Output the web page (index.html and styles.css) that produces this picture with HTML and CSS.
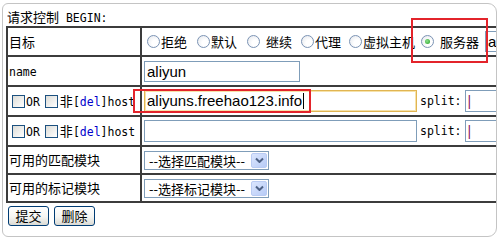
FILE: index.html
```html
<!DOCTYPE html>
<html lang="zh-CN">
<head>
<meta charset="utf-8">
<title>请求控制</title>
<link rel="stylesheet" href="styles.css">
</head>
<body>
<div class="frame">
  <div class="head">请求控制<span class="m"> BEGIN:</span></div>
  <table class="grid">
    <tr class="r1">
      <td class="c1">目标</td>
      <td class="c2">
        <div class="radios">
          <span class="opt"><span class="radio"></span><span class="lbl">拒绝</span></span>
          <span class="opt g10"><span class="radio"></span><span class="lbl">默认</span></span>
          <span class="opt g10"><span class="radio"></span><span class="lbl sp">继续</span></span>
          <span class="opt g9"><span class="radio"></span><span class="lbl">代理</span></span>
          <span class="opt g8"><span class="radio"></span><span class="lbl">虚拟主机</span></span>
          <span class="opt g6"><span class="radio on"></span><span class="lbl sp">服务器</span></span>
          <span class="field f-server">a</span>
        </div>
      </td>
    </tr>
    <tr class="r2">
      <td class="c1"><span class="m">name</span></td>
      <td class="c2"><span class="field f-name">aliyun</span></td>
    </tr>
    <tr class="r3">
      <td class="c1"><span class="chk"></span><span class="m">OR</span><span class="chk c2nd"></span>非<span class="m">[<span class="del">del</span>]host</span></td>
      <td class="c2"><div class="line"><span class="field f-host focus">aliyuns.freehao123.info<span class="caret"></span></span><span class="m split">split:</span><span class="field f-split"><span class="bar">|</span></span></div></td>
    </tr>
    <tr class="r4">
      <td class="c1"><span class="chk"></span><span class="m">OR</span><span class="chk c2nd"></span>非<span class="m">[<span class="del">del</span>]host</span></td>
      <td class="c2"><div class="line"><span class="field f-host"></span><span class="m split">split:</span><span class="field f-split"><span class="bar">|</span></span></div></td>
    </tr>
    <tr class="r5">
      <td class="c1">可用的匹配模块</td>
      <td class="c2"><span class="sel"><span class="sel-txt">--选择匹配模块--</span><span class="sel-btn"><svg width="9" height="6" viewBox="0 0 9 6"><path d="M1 1.5 L4.5 5 L8 1.5" fill="none" stroke="#4d6185" stroke-width="2"/></svg></span></span></td>
    </tr>
    <tr class="r6">
      <td class="c1">可用的标记模块</td>
      <td class="c2"><span class="sel"><span class="sel-txt">--选择标记模块--</span><span class="sel-btn"><svg width="9" height="6" viewBox="0 0 9 6"><path d="M1 1.5 L4.5 5 L8 1.5" fill="none" stroke="#4d6185" stroke-width="2"/></svg></span></span></td>
    </tr>
  </table>
  <div class="actions">
    <button class="btn">提交</button>
    <button class="btn">删除</button>
  </div>
</div>
<div class="mark mark-server"></div>
<div class="mark mark-host"></div>
</body>
</html>
```

FILE: styles.css
```css
* { box-sizing: border-box; }
html, body { margin: 0; padding: 0; background: #fff; }
body {
  font-family: "Noto Sans CJK SC", "Liberation Sans", sans-serif;
  font-size: 13px;
  color: #000;
  width: 500px;
  height: 240px;
  overflow: hidden;
  position: relative;
}
.frame {
  margin: 3px 0 0 2px;
  width: 495px;
  height: 234px;
  border: 1px solid #c4c4c4;
  border-radius: 6px 9px 9px 6px;
  overflow: hidden;
}
.head {
  height: 22px;
  padding: 4px 0 0 4px;
  line-height: 18px;
  white-space: nowrap;
}
.m {
  font-family: "DejaVu Sans Mono", "Liberation Mono", monospace;
  font-size: 11.5px;
  font-weight: normal;
}
.grid {
  margin-left: 3px;
  border-collapse: separate;
  border-spacing: 0;
  border-top: 2px solid #3c3c3c;
  border-left: 2px solid #3c3c3c;
  width: 620px;
  table-layout: fixed;
}
.grid td {
  border-right: 2px solid #3c3c3c;
  border-bottom: 2px solid #3c3c3c;
  padding: 0;
  vertical-align: middle;
  white-space: nowrap;
  line-height: 18px;
}
.grid td.c1 { width: 134px; padding-left: 1px; }
.grid td.c2 { padding-left: 2px; }
.r1 td { height: 29px; }
.r2 td, .r3 td, .r4 td { height: 30px; }
.r5 td, .r6 td { height: 28px; }

.radios { display: flex; align-items: center; }
.opt { display: inline-flex; align-items: center; }
.opt:first-child { margin-left: 3px; }
.g6 { margin-left: 6px; }
.g8 { margin-left: 8px; }
.g9 { margin-left: 9px; }
.g10 { margin-left: 10px; }
.radio {
  display: inline-block;
  width: 13px;
  height: 13px;
  border-radius: 50%;
  border: 1px solid #7b93b4;
  background: radial-gradient(circle at 65% 65%, #fff 0%, #fff 30%, #e2e5ea 100%);
  margin-right: 1px;
  position: relative;
}
.radio.on::after {
  content: "";
  position: absolute;
  left: 3px;
  top: 3px;
  width: 5px;
  height: 5px;
  border-radius: 50%;
  background: radial-gradient(circle at 40% 40%, #8ee08e, #21a121);
}
.lbl.sp { margin-left: 5px; }
.opt + .field { margin-left: 6px; }

.field {
  display: inline-block;
  border: 1px solid #7f9db9;
  background: #fff;
  font-family: "Liberation Sans", Arial, sans-serif;
  font-size: 15px;
  line-height: 19px;
  padding: 0 2px;
  vertical-align: middle;
  overflow: hidden;
}
.f-server { width: 60px; height: 21px; }
.f-name { width: 156px; height: 21px; }
.line { display: flex; align-items: center; }
.f-host { width: 273px; height: 22px; }
.f-host.focus { border-color: #e1b552; box-shadow: inset 0 0 0 1px #f6e2aa; }
.caret { display: inline-block; width: 1px; height: 16px; background: #000; vertical-align: -3px; margin-left: 1px; }
.split { margin-left: 3px; margin-right: 3px; }
.f-split { width: 60px; height: 22px; }
.bar { color: #8a1a6a; font-family: "Liberation Sans", sans-serif; font-size: 14px; }

.chk {
  display: inline-block;
  width: 13px;
  height: 13px;
  border: 1px solid #1c5180;
  background: linear-gradient(135deg, #dcdcd7 0%, #fff 100%);
  vertical-align: -2px;
  margin: 0 1px 0 3px;
}
.chk.c2nd { margin-left: 5px; margin-right: 2px; }
.del { color: #0000cc; }

.sel {
  display: inline-flex;
  align-items: center;
  width: 125px;
  height: 19px;
  border: 1px solid #7f9db9;
  background: #fff;
  vertical-align: middle;
  padding: 1px;
}
.sel-txt { flex: 1; padding-left: 3px; line-height: 17px; }
.sel-btn {
  width: 16px;
  height: 15px;
  border: 1px solid #b9cbf3;
  border-radius: 2px;
  background: linear-gradient(135deg, #dbe6fe 0%, #b7cbf6 100%);
  display: flex;
  align-items: center;
  justify-content: center;
}

.actions { padding: 3px 0 0 5px; display: flex; gap: 5px; }
.btn {
  font-family: "Noto Sans CJK SC", sans-serif;
  font-size: 13px;
  width: 41px;
  height: 20px;
  padding: 0;
  line-height: 18px;
  border: 1px solid #003c74;
  border-radius: 3px;
  background: linear-gradient(#ffffff 0%, #f5f5f2 55%, #dadad4 100%);
  color: #000;
}

.mark {
  position: absolute;
  border: 2px solid #e3242b;
  pointer-events: none;
}
.mark-server { left: 411px; top: 18px; width: 77px; height: 45px; }
.mark-host { left: 133px; top: 89px; width: 178px; height: 24px; }
```
